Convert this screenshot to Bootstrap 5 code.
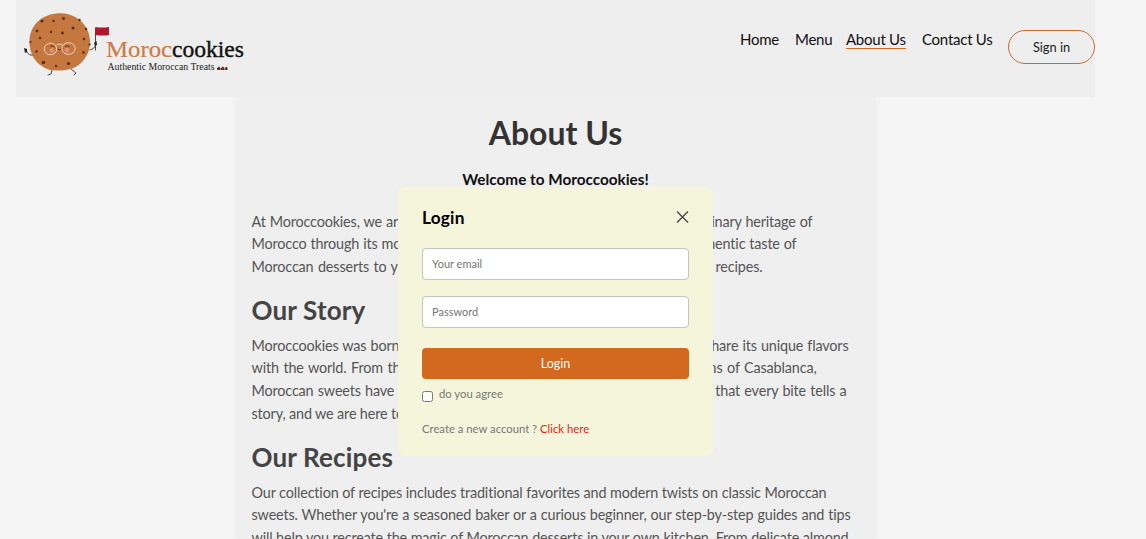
<!DOCTYPE html>
<html lang="en">
<head>
<meta charset="utf-8">
<meta name="viewport" content="width=device-width, initial-scale=1">
<title>Moroccookies - About Us</title>
<link href="https://cdn.jsdelivr.net/npm/bootstrap@5.3.0/dist/css/bootstrap.min.css" rel="stylesheet">
<style>
html,body{height:539px;overflow:hidden}
body{font-family:Lato,"Open Sans",sans-serif;background:#f5f5f5;color:#555}
.site{width:1079px;margin-left:16px}
.topbar{height:97px;background:#eee}
.menu{gap:16px;padding-top:29px}
.menu a{color:#111;font-size:15px;letter-spacing:-.25px;line-height:20px;height:20px;text-decoration:none;white-space:nowrap}
.menu .active{border-bottom:1px solid #d2691e}
.m-home{width:39px}.m-menu{width:35px}.m-about{width:60px}.m-contact{width:70px}
.signin{width:87px;height:34px;border:1px solid #c96a33;border-radius:50px;background:transparent;color:#222;font-size:12.8px;padding:2px 0 0;margin-top:1px}
.about{width:640px;height:442px;padding:16px 16px 0;background:#efefef;box-shadow:0 0 7px rgba(0,0,0,.04);clip-path:inset(0 -10px)}
.about h1{font-size:32px;line-height:40px;font-weight:700;color:#333;margin:0 0 16px}
.welcome{font-size:15.3px;line-height:20px;font-weight:700;color:#111;margin:0 0 21.500px}
.about h2{font-size:26px;line-height:33px;font-weight:700;color:#444;margin:0 0 8px;white-space:nowrap;letter-spacing:.15px}
.copy{font-size:14.4px;line-height:22.6px;margin:0 0 15.500px;letter-spacing:-.15px;font-variant-ligatures:none}
.copy span{display:block;white-space:nowrap;text-align-last:justify}
.copy .loose{text-align-last:left}
.w561{width:561px}.w545{width:545px}.w511{width:511px}.w597{width:597px}.w565{width:565px}.w595{width:595px}.w575{width:575px}.w599{width:599px}
.login{position:absolute;left:398px;top:187px;width:315px;height:269px;background:#f5f5dc;border-radius:7px;padding:20px 24px 0;font-size:11.3px;color:#777}
.login h3{font-size:17.3px;font-weight:700;line-height:22px;color:#000;margin:0 0 19px;height:22px;letter-spacing:.2px}
.login .form-control{height:32px;border:1px solid #c4c4c4;border-radius:4px;font-size:11px;padding:0 9px 1px;margin-bottom:16px}
.login .form-control::placeholder{color:#757575}
.enter{height:31px;background:#d2691e;border:0;border-radius:4px;color:#fff;font-size:12.5px;margin-top:4px;padding-top:2px}
.agree{gap:6px;margin-top:7px;line-height:15px}
.agree input{width:11px;height:11px;margin:5px 0 0}
.create{margin:18px 0 0;line-height:17px}
.create a{color:#ed1c0d;text-decoration:none}
</style>
</head>
<body>
<div class="site">
<header class="topbar d-flex justify-content-between">
<svg width="236" height="90" viewBox="16 0 236 90" role="img" aria-label="Moroccookies">
<g fill="none" stroke="#3b302b" stroke-width=".9" stroke-linecap="round"><path d="M36 55Q28 57 26 50M90 50Q95 49 96 44M52 70L51 74L48 75M71 69L76 73L74 75"/><path d="M95.500 28V50"/></g>
<path d="M24 48l1 5 2-1 0-3zM94 43l1 3 2-1-.5-4z" fill="#222"/>
<path d="M95.500 27q7 1 13.500 0v8q-6 1-13.500 0z" fill="#b3152f"/><circle cx="102" cy="31.500" r="1.200" fill="#8b2026"/>
<path d="M59 13.300C73 13 82 20 87 29C93 42 90 54 81 63C73 71 58 72 47 69C35 64 29 53 29.500 41C30 24 43 14 59 13.300Z" fill="#c4773f"/>
<g fill="#5d2d16"><circle cx="42" cy="21" r="1.600"/><circle cx="53.500" cy="21" r="1.200"/><circle cx="63.500" cy="18.500" r="1.400"/><circle cx="79.500" cy="20" r="1.200"/><circle cx="73" cy="28" r="1.500"/><circle cx="86" cy="29" r="1.200"/><circle cx="37" cy="31" r="1.400"/><circle cx="51" cy="32" r="1.200"/><circle cx="62.500" cy="33" r="1.400"/><circle cx="40" cy="38" r="1.300"/><circle cx="30.500" cy="42" r="1.100"/><circle cx="84" cy="39" r="1.300"/><circle cx="89.500" cy="44.500" r="1.100"/><circle cx="36.500" cy="51.500" r="1.300"/><circle cx="83.500" cy="52.500" r="1.300"/><circle cx="43.500" cy="62.500" r="1.700"/><circle cx="56" cy="66" r="1.200"/><circle cx="68.500" cy="63.500" r="1.600"/></g>
<g fill="#e58e78"><circle cx="52" cy="50.500" r="2.300"/><circle cx="67" cy="50" r="2.300"/></g>
<path d="M50 46.500q2.500-2 4.500.5M65 46.500q2.500-2 4.500.5M57.500 49q2 2 4 0" fill="none" stroke="#54301f"/>
<g fill="none" stroke="#f3d4bb"><ellipse cx="50.500" cy="49" rx="6.200" ry="5.800"/><ellipse cx="68.500" cy="48.500" rx="6.700" ry="5.800"/><path d="M56.500 45q3-2 6 0"/></g>
<g font-family="Liberation Serif,serif"><text x="106" y="56.500" font-size="24" fill="#c77d49" stroke="#c77d49" stroke-width=".2" textLength="66" lengthAdjust="spacingAndGlyphs">Moroc</text><text x="172" y="56.500" font-size="24" fill="#111" stroke="#111" stroke-width=".4" textLength="72" lengthAdjust="spacingAndGlyphs">cookies</text><text x="107.500" y="70" font-size="9.700" fill="#222" textLength="107" lengthAdjust="spacingAndGlyphs">Authentic Moroccan Treats</text></g>
<g fill="#62351e"><path d="M217 70v-2l2-1.500 1.500 1.500v2zM221 70v-2l2-1.500 1.500 1.500v2zM225 70v-2l1.500-1.500 1 1.500v2z"/></g>
</svg>
<nav class="menu d-flex align-items-start">
<a class="m-home" href="#">Home</a><a class="m-menu" href="#">Menu</a><a class="m-about active" href="#">About Us</a><a class="m-contact" href="#">Contact Us</a>
<button class="signin">Sign in</button>
</nav>
</header>
<main class="about mx-auto">
<h1 class="text-center">About Us</h1>
<p class="welcome text-center">Welcome to Moroccookies!</p>
<p class="copy"><span class="w561">At Moroccookies, we are passionate about sharing the rich and diverse culinary heritage of</span><span class="w545">Morocco through its most beloved sweets. Our mission is to bring the authentic taste of</span><span class="w511">Moroccan desserts to your home through our carefully crafted, traditional recipes.</span></p>
<h2>Our Story</h2>
<p class="copy"><span class="w597">Moroccookies was born out of love for Moroccan cuisine and a desire to share its unique flavors</span><span class="w565">with the world. From the lively markets of Marrakech to the home kitchens of Casablanca,</span><span class="w595">Moroccan sweets have always been a special part of our lives. We believe that every bite tells a</span><span class="loose">story, and we are here to share those stories with you.</span></p>
<h2>Our Recipes</h2>
<p class="copy mb-0"><span class="w575">Our collection of recipes includes traditional favorites and modern twists on classic Moroccan</span><span class="w599">sweets. Whether you're a seasoned baker or a curious beginner, our step-by-step guides and tips</span><span class="w597">will help you recreate the magic of Moroccan desserts in your own kitchen. From delicate almond</span></p>
</main>
</div>
<section class="login">
<div class="d-flex justify-content-between"><h3>Login</h3><svg class="mt-1" width="13" height="13" viewBox="0 0 13 13"><path d="M1 .5L12 11.500M12 .5L1 11.500" stroke="#444" stroke-width="1.300"/></svg></div>
<input class="form-control" type="email" placeholder="Your email" aria-label="Your email">
<input class="form-control" type="password" placeholder="Password" aria-label="Password">
<button class="enter w-100">Login</button>
<label class="agree d-flex align-items-start"><input type="checkbox"><span>do you agree</span></label>
<p class="create">Create a new account ? <a href="#">Click here</a></p>
</section>
<script src="https://cdn.jsdelivr.net/npm/bootstrap@5.3.0/dist/js/bootstrap.bundle.min.js"></script>
</body>
</html>
